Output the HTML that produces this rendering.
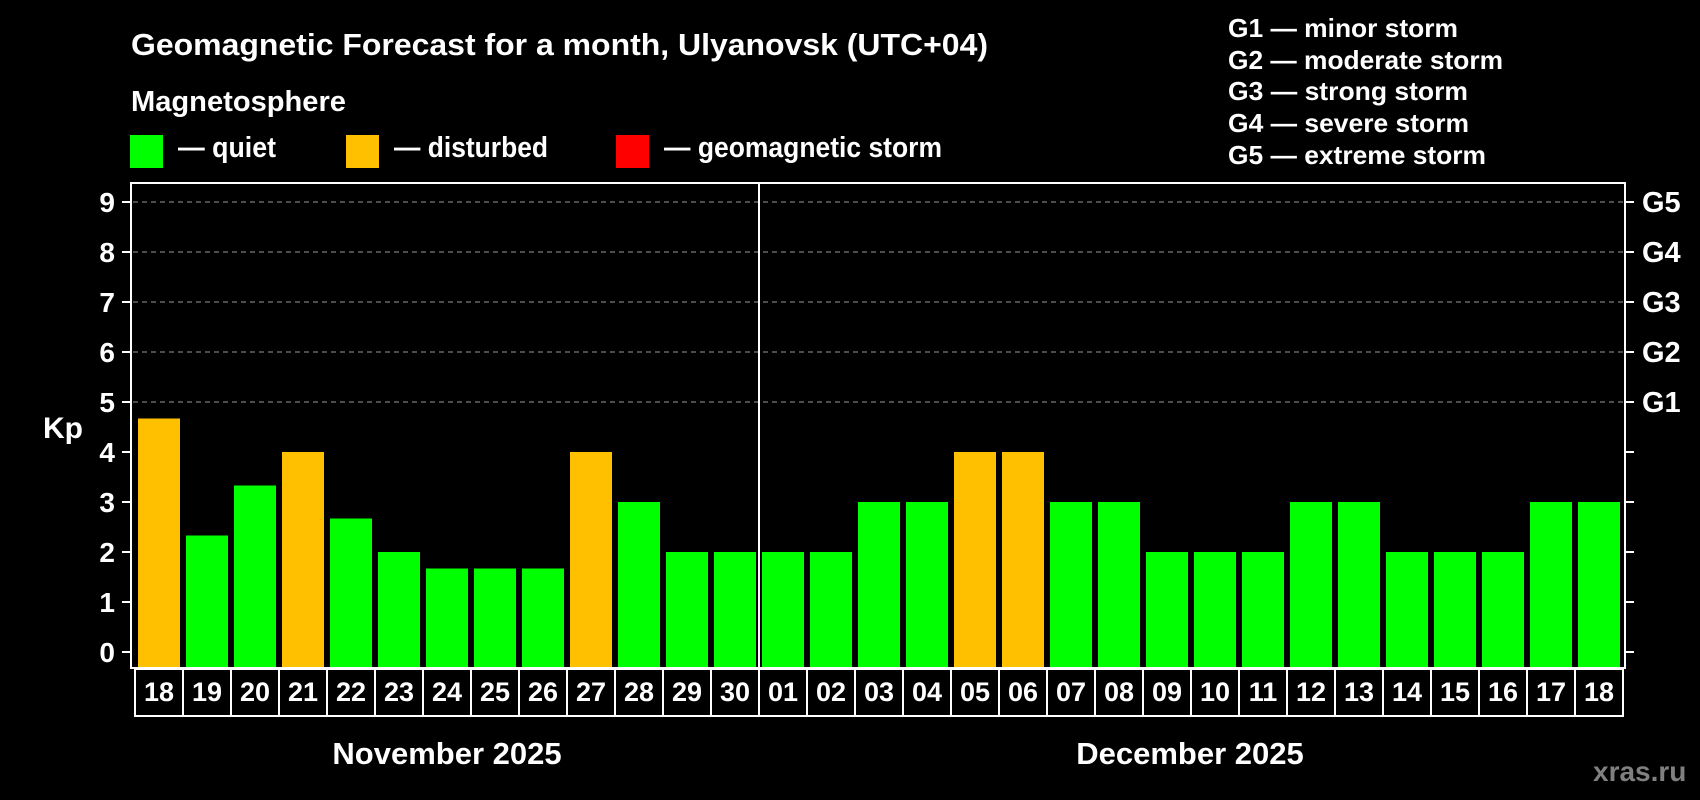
<!DOCTYPE html>
<html><head><meta charset="utf-8"><style>
html,body{margin:0;padding:0;background:#000;width:1700px;height:800px;overflow:hidden}
svg{display:block}
text{font-family:"Liberation Sans",Arial,sans-serif;font-weight:bold;fill:#fff}
</style></head><body>
<svg width="1700" height="800" viewBox="0 0 1700 800" xmlns="http://www.w3.org/2000/svg">
<rect width="1700" height="800" fill="#000"/>
<text x="131" y="55" font-size="31" textLength="857" lengthAdjust="spacingAndGlyphs">Geomagnetic Forecast for a month, Ulyanovsk (UTC+04)</text>
<text x="131" y="111" font-size="29" textLength="215" lengthAdjust="spacingAndGlyphs">Magnetosphere</text>
<rect x="130" y="135" width="33" height="33" fill="#00ff00"/>
<text x="178" y="157" font-size="29" textLength="98" lengthAdjust="spacingAndGlyphs">— quiet</text>
<rect x="346" y="135" width="33" height="33" fill="#ffc000"/>
<text x="394" y="157" font-size="29" textLength="154" lengthAdjust="spacingAndGlyphs">— disturbed</text>
<rect x="616" y="135" width="33" height="33" fill="#ff0000"/>
<text x="664" y="157" font-size="29" textLength="278" lengthAdjust="spacingAndGlyphs">— geomagnetic storm</text>
<g font-size="26">
<text x="1228" y="37" textLength="230" lengthAdjust="spacingAndGlyphs">G1 — minor storm</text>
<text x="1228" y="69" textLength="275" lengthAdjust="spacingAndGlyphs">G2 — moderate storm</text>
<text x="1228" y="100" textLength="240" lengthAdjust="spacingAndGlyphs">G3 — strong storm</text>
<text x="1228" y="132" textLength="241" lengthAdjust="spacingAndGlyphs">G4 — severe storm</text>
<text x="1228" y="164" textLength="258" lengthAdjust="spacingAndGlyphs">G5 — extreme storm</text>
</g>
<g id="grid" stroke="#999" stroke-width="1" stroke-dasharray="5,4">
<line x1="133" y1="202" x2="1624" y2="202"/>
<line x1="133" y1="252" x2="1624" y2="252"/>
<line x1="133" y1="302" x2="1624" y2="302"/>
<line x1="133" y1="352" x2="1624" y2="352"/>
<line x1="133" y1="402" x2="1624" y2="402"/>
</g>
<g id="bars"></g>
<rect x="131" y="183" width="1494" height="485" fill="none" stroke="#fff" stroke-width="2"/>
<line x1="759" y1="183" x2="759" y2="668" stroke="#fff" stroke-width="2"/>
<g id="ticks" stroke="#fff" stroke-width="2"></g>
<g id="ylab" font-size="28" text-anchor="end"></g>
<g id="glab" font-size="29"></g>
<text x="43" y="438" font-size="30">Kp</text>
<g id="dates"></g>
<text x="447" y="764" font-size="31" text-anchor="middle">November 2025</text>
<text x="1190" y="764" font-size="31" text-anchor="middle">December 2025</text>
<text x="1593" y="781" font-size="28" style="fill:#808080">xras.ru</text>
<script>
var v=[4.67,2.33,3.33,4,2.67,2,1.67,1.67,1.67,4,3,2,2,2,2,3,3,4,4,3,3,2,2,2,3,3,2,2,2,3,3];
var d=["18","19","20","21","22","23","24","25","26","27","28","29","30","01","02","03","04","05","06","07","08","09","10","11","12","13","14","15","16","17","18"];
var ns="http://www.w3.org/2000/svg";
function el(t,a,p,txt){var e=document.createElementNS(ns,t);for(var k in a)e.setAttribute(k,a[k]);if(txt)e.textContent=txt;document.getElementById(p).appendChild(e);}
for(var i=0;i<31;i++){
 var x=138+48*i, y=652-50*v[i];
 el("rect",{x:x,y:y,width:42,height:668-y,fill:(v[i]>=4?"#ffc000":"#00ff00")},"bars");
 el("rect",{x:135+48*i,y:669,width:48,height:47,fill:"none",stroke:"#fff","stroke-width":2},"dates");
 el("text",{x:159+48*i,y:701,"font-size":27,"text-anchor":"middle"},"dates",d[i]);
}
for(var k=0;k<=9;k++){
 var y=652-50*k;
 el("line",{x1:122,y1:y,x2:131,y2:y},"ticks");
 el("line",{x1:1625,y1:y,x2:1634,y2:y},"ticks");
 el("text",{x:115,y:y+10},"ylab",""+k);
 if(k>=5) el("text",{x:1642,y:y+10},"glab","G"+(k-4));
}
</script>
</svg>
</body></html>
